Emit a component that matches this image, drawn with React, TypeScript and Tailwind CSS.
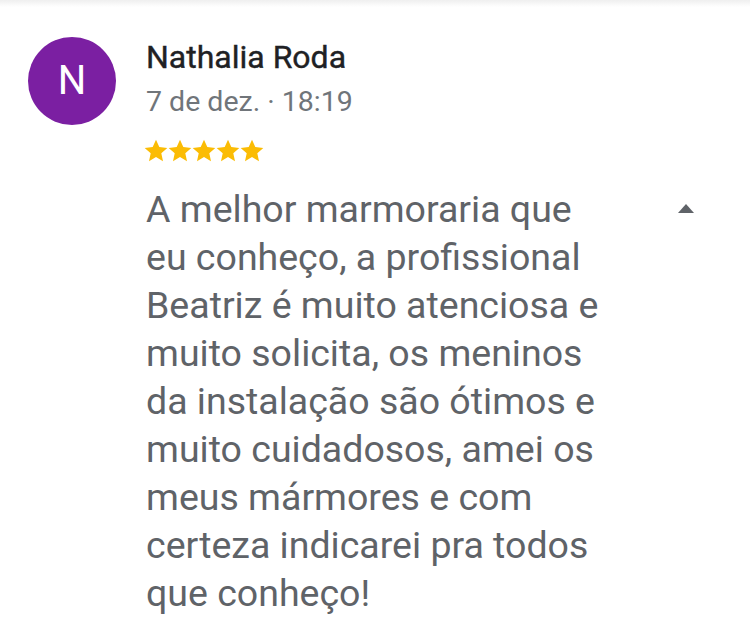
import React from 'react';

const lines = [
  'A melhor marmoraria que',
  'eu conheço, a profissional',
  'Beatriz é muito atenciosa e',
  'muito solicita, os meninos',
  'da instalação são ótimos e',
  'muito cuidadosos, amei os',
  'meus mármores e com',
  'certeza indicarei pra todos',
  'que conheço!',
];

function Star() {
  return (
    <svg viewBox="0 0 24 24" className="h-[24px] w-[24px]" fill="#fbbc04">
      <path d="M12 0.8l3.3 7.3 8 .8-6 5.4 1.7 7.9L12 18.1l-7 4.1 1.7-7.9-6-5.4 8-.8z" />
    </svg>
  );
}

export default function App() {
  return (
    <div
      className="relative h-[639px] w-[750px] overflow-hidden bg-white"
      style={{ fontFamily: 'Roboto, "Liberation Sans", sans-serif' }}
    >
      <div className="absolute left-0 right-0 top-0 h-[7px] bg-gradient-to-b from-[#efefef] to-white" />
      <div className="flex pl-[28px] pt-[37px]">
        <div className="flex h-[88px] w-[88px] shrink-0 items-center justify-center rounded-full bg-[#7b1fa2] text-[40px] leading-none text-white">
          N
        </div>
        <div className="ml-[30px] flex-1">
          <div className="mt-[2px] text-[32px] leading-[36px] text-[#202124] [-webkit-text-stroke:0.4px_#202124]">
            Nathalia Roda
          </div>
          <div className="mt-[9px] text-[28.5px] leading-[36px] text-[#70757a]">7 de dez. · 18:19</div>
          <div className="-ml-[2px] mt-[19px] flex">
            {[0, 1, 2, 3, 4].map((i) => (
              <Star key={i} />
            ))}
          </div>
          <div className="mt-[22px] flex items-start pr-[55px]">
            <p className="flex-1 text-[37.5px] leading-[48px] text-[#5f6368]">
              {lines.map((l, i) => (
                <React.Fragment key={i}>
                  {l}
                  {i < lines.length - 1 && <br />}
                </React.Fragment>
              ))}
            </p>
            <svg viewBox="0 0 18 10" className="mt-[18px] h-[10px] w-[18px]" fill="#5f6368">
              <path d="M1 10L9 1l8 9z" />
            </svg>
          </div>
        </div>
      </div>
    </div>
  );
}
